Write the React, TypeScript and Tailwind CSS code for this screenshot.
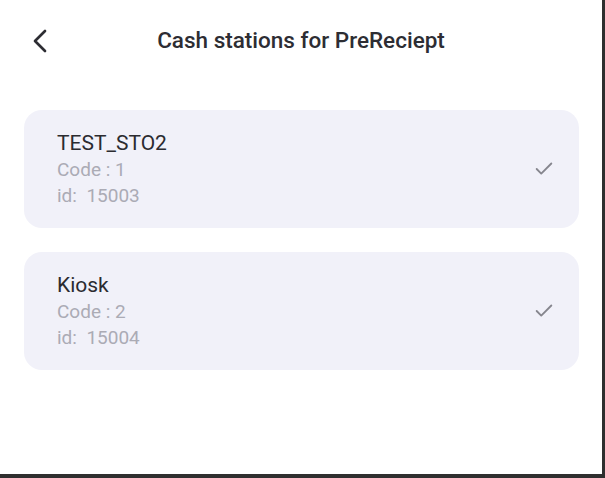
import { ChevronLeft, Check } from "lucide-react";

interface Station {
  name: string;
  code: number;
  id: number;
}

const stations: Station[] = [
  { name: "TEST_STO2", code: 1, id: 15003 },
  { name: "Kiosk", code: 2, id: 15004 },
];

function StationCard({ station }: { station: Station }) {
  return (
    <div className="flex h-[118px] items-center justify-between rounded-[18px] bg-[#f1f1f9] pl-[33px] pr-[24px]">
      <div className="flex flex-col">
        <span className="text-[21px] leading-[27px] text-[#2b2b30]">
          {station.name}
        </span>
        <span className="text-[19px] leading-[26px] text-[#ababb5]">
          Code : {station.code}
        </span>
        <span className="text-[19px] leading-[26px] text-[#ababb5]">
          id:&nbsp; {station.id}
        </span>
      </div>
      <Check className="h-[22px] w-[22px] text-[#86868e]" strokeWidth={2} />
    </div>
  );
}

export default function App() {
  return (
    <div
      className="flex h-[478px] w-[605px] flex-col bg-[#2f2f2f]"
      style={{ fontFamily: "Roboto, 'Noto Sans', sans-serif" }}
    >
      <div className="flex flex-1 flex-col bg-white mr-[3px] mb-[4px]">
        <div className="relative flex h-[82px] items-center justify-center">
          <ChevronLeft
            className="absolute left-[20px] top-[21px] h-[40px] w-[40px] text-[#2d2d33]"
            strokeWidth={1.6}
          />
          <h1 className="text-[22.5px] font-medium text-[#2d2d33]">
            Cash stations for PreReciept
          </h1>
        </div>
        <div className="mt-[28px] flex flex-col gap-[24px] pl-[24px] pr-[23px]">
          {stations.map((s) => (
            <StationCard key={s.id} station={s} />
          ))}
        </div>
      </div>
    </div>
  );
}
